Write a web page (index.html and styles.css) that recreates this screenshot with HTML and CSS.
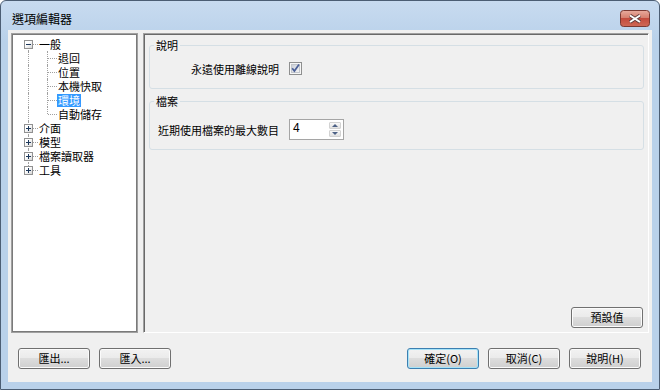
FILE: index.html
```html
<!DOCTYPE html>
<html lang="zh-Hant">
<head>
    <meta charset="UTF-8">
    <title>選項編輯器</title>
    <link rel="stylesheet" href="styles.css">
</head>
<body>
    <div class="window">
        <div class="titlebar">
            <span class="title">選項編輯器</span>
            <svg class="close-btn" width="30" height="17" viewBox="0 0 30 17">
                <defs>
                    <linearGradient id="closeFill" x1="0" y1="0" x2="0" y2="1">
                        <stop offset="0" stop-color="#e8ab9e"/>
                        <stop offset="0.45" stop-color="#d6806f"/>
                        <stop offset="0.5" stop-color="#c34b3d"/>
                        <stop offset="1" stop-color="#cf6a57"/>
                    </linearGradient>
                </defs>
                <rect x="0.5" y="0.5" width="29" height="16" rx="3" fill="url(#closeFill)" stroke="#7a3a33"/>
                <path d="M10 5.5 L20 12 M20 5.5 L10 12" stroke="#5b3b3b" stroke-width="3.8"/>
                <path d="M10 5.5 L20 12 M20 5.5 L10 12" stroke="#fff" stroke-width="2"/>
            </svg>
        </div>

        <div class="client">
            <div class="main">
                <!-- category tree -->
                <div class="tree">
                    <div class="node">
                        <span class="gut line-down elbow"><span class="expander"></span></span>
                        <span class="text">一般</span>
                    </div>
                    <div class="node">
                        <span class="gut line-full"></span>
                        <span class="gut line-full elbow"></span>
                        <span class="text">退回</span>
                    </div>
                    <div class="node">
                        <span class="gut line-full"></span>
                        <span class="gut line-full elbow"></span>
                        <span class="text">位置</span>
                    </div>
                    <div class="node">
                        <span class="gut line-full"></span>
                        <span class="gut line-full elbow"></span>
                        <span class="text">本機快取</span>
                    </div>
                    <div class="node">
                        <span class="gut line-full"></span>
                        <span class="gut line-full elbow"></span>
                        <span class="text selected">環境</span>
                    </div>
                    <div class="node">
                        <span class="gut line-full"></span>
                        <span class="gut line-up elbow"></span>
                        <span class="text">自動儲存</span>
                    </div>
                    <div class="node">
                        <span class="gut line-full elbow"><span class="expander plus"></span></span>
                        <span class="text">介面</span>
                    </div>
                    <div class="node">
                        <span class="gut line-full elbow"><span class="expander plus"></span></span>
                        <span class="text">模型</span>
                    </div>
                    <div class="node">
                        <span class="gut line-full elbow"><span class="expander plus"></span></span>
                        <span class="text">檔案讀取器</span>
                    </div>
                    <div class="node">
                        <span class="gut line-up elbow"><span class="expander plus"></span></span>
                        <span class="text">工具</span>
                    </div>
                </div>

                <!-- settings page -->
                <div class="page">
                    <fieldset class="group group-help">
                        <legend>說明</legend>
                        <div class="form-row">
                            <label class="form-label">永遠使用離線說明</label>
                            <svg class="checkbox" width="13" height="13" viewBox="0 0 13 13">
                                <defs>
                                    <linearGradient id="checkFill" x1="0" y1="0" x2="1" y2="1">
                                        <stop offset="0" stop-color="#c9ced6"/>
                                        <stop offset="1" stop-color="#f6f6f6"/>
                                    </linearGradient>
                                </defs>
                                <rect x="0.5" y="0.5" width="12" height="12" fill="#f6f6f6" stroke="#8e8f8f"/>
                                <rect x="2.5" y="2.5" width="8" height="8" fill="url(#checkFill)" stroke="#c2c6cc"/>
                                <path d="M3.2 6.2 L5.4 9 L10 2.6" fill="none" stroke="#4a5f97" stroke-width="1.7"/>
                            </svg>
                        </div>
                    </fieldset>

                    <fieldset class="group group-file">
                        <legend>檔案</legend>
                        <div class="form-row">
                            <label class="form-label">近期使用檔案的最大數目</label>
                            <div class="spin">
                                <span class="spin-value">4</span>
                                <span class="spin-buttons">
                                    <span class="spin-btn up"></span>
                                    <span class="spin-btn down"></span>
                                </span>
                            </div>
                        </div>
                    </fieldset>

                    <div class="page-footer">
                        <button class="btn">預設值</button>
                    </div>
                </div>
            </div>

            <div class="actions">
                <button class="btn">匯出...</button>
                <button class="btn">匯入...</button>
                <button class="btn btn-default push">確定(O)</button>
                <button class="btn">取消(C)</button>
                <button class="btn">說明(H)</button>
            </div>
        </div>
    </div>
</body>
</html>
```

FILE: styles.css
```css
body {
    margin: 0;
    background: #fff;
    font-family: "Noto Sans CJK TC", "Noto Sans", sans-serif;
    font-size: 11px;
    color: #000;
}
.window {
    width: 660px;
    height: 390px;
    box-sizing: border-box;
    border: 1px solid #4c5e74;
    border-radius: 6px 6px 0 0;
    background: linear-gradient(#c8dbf0, #b9d1ea 40px);
    padding: 0 7px 7px;
    display: flex;
    flex-direction: column;
}
.titlebar {
    height: 29px;
    box-sizing: border-box;
    padding-top: 9px;
    display: flex;
    align-items: flex-start;
    justify-content: space-between;
}
.title {
    margin-left: 4px;
    font-size: 12px;
    line-height: 17px;
}
.close-btn {
    margin-right: 2px;
}
.client {
    flex: 1;
    background: #f0f0f0;
    display: flex;
    flex-direction: column;
}
.main {
    display: flex;
    gap: 5px;
    height: 300px;
    margin: 3px 3px 0 3px;
}

/* tree */
.tree {
    width: 127px;
    flex: none;
    box-sizing: border-box;
    border: 1px solid #a0a0a0;
    box-shadow: inset 0 0 0 1px #7a7a7a;
    background: #fff;
    padding: 3px 0 0 7px;
}
.node {
    display: flex;
    align-items: center;
    height: 14px;
}
.gut {
    position: relative;
    width: 19px;
    height: 14px;
    flex: none;
    display: flex;
    justify-content: center;
    align-items: flex-start;
}
.gut::before {
    content: "";
    position: absolute;
    left: 9px;
    border-left: 1px dotted #a0a0a0;
}
.line-full::before {
    top: 0;
    bottom: 0;
}
.line-down::before {
    top: 7px;
    bottom: 0;
}
.line-up::before {
    top: 0;
    height: 7px;
}
.elbow::after {
    content: "";
    position: absolute;
    left: 10px;
    right: 0;
    top: 7px;
    border-top: 1px dotted #a0a0a0;
}
.expander {
    position: relative;
    z-index: 1;
    width: 9px;
    height: 9px;
    margin-top: 3px;
    box-sizing: border-box;
    border: 1px solid #919191;
    background: linear-gradient(135deg, #fff 35%, #d6d6d6);
}
.expander::before {
    content: "";
    position: absolute;
    left: 1px;
    right: 1px;
    top: 3px;
    height: 1px;
    background: #1e395b;
}
.expander.plus::after {
    content: "";
    position: absolute;
    top: 1px;
    bottom: 1px;
    left: 3px;
    width: 1px;
    background: #1e395b;
}
.text {
    padding: 0 1px;
    line-height: 13px;
    white-space: nowrap;
}
.text.selected {
    background: #3399ff;
    color: #fff;
}

/* page */
.page {
    flex: 1;
    border: 1px solid;
    border-color: #a0a0a0 #fff #fff #a0a0a0;
    box-shadow: inset 1px 1px 0 #696969;
    padding: 4px 4px 4px 5px;
    display: flex;
    flex-direction: column;
}
.group {
    margin: 0;
    border: 1px solid #d5dfe5;
    border-radius: 3px;
    padding: 6px 8px 9px;
}
.group legend {
    margin-left: -4px;
    padding: 0 2px;
    line-height: 14px;
}
.group-file {
    margin-top: 5px;
    padding-top: 11px;
}
.form-row {
    display: grid;
    grid-template-columns: 121px auto;
    column-gap: 10px;
    align-items: center;
    justify-content: start;
    min-height: 21px;
}
.form-label {
    text-align: right;
    white-space: nowrap;
}
.checkbox {
    display: block;
}
.spin {
    width: 55px;
    height: 21px;
    box-sizing: border-box;
    border: 1px solid #a5a5a5;
    background: #fff;
    padding: 2px;
    display: flex;
    justify-content: space-between;
}
.spin-value {
    padding-left: 1px;
    font-family: "Liberation Sans", sans-serif;
    font-size: 12px;
    line-height: 13px;
}
.spin-buttons {
    display: flex;
    flex-direction: column;
    gap: 1px;
}
.spin-btn {
    width: 12px;
    height: 7px;
    box-sizing: border-box;
    border: 1px solid #d2d2d2;
    border-radius: 1px;
    background: linear-gradient(#f8f8f8, #e1e1e1);
    display: flex;
    align-items: center;
    justify-content: center;
}
.spin-btn::before {
    content: "";
    border-left: 3px solid transparent;
    border-right: 3px solid transparent;
}
.spin-btn.up::before {
    border-bottom: 3px solid #4d6185;
}
.spin-btn.down::before {
    border-top: 3px solid #4d6185;
}
.page-footer {
    margin-top: auto;
    display: flex;
    justify-content: flex-end;
    padding-right: 1px;
}

/* buttons */
.btn {
    width: 72px;
    height: 21px;
    box-sizing: border-box;
    border: 1px solid #707070;
    border-radius: 3px;
    background: linear-gradient(#f2f2f2 0%, #ebebeb 45%, #dddddd 50%, #cfcfcf 100%);
    box-shadow: inset 0 0 0 1px #fbfbfb;
    font: 11px "Noto Sans CJK TC", "Noto Sans", sans-serif;
    color: #000;
    padding: 0;
    line-height: 19px;
}
.btn-default {
    border-color: #3c7fb1;
    box-shadow: inset 0 0 0 1px #a6e3f8;
}
.actions {
    display: flex;
    gap: 9px;
    margin-top: 15px;
    padding: 0 11px 0 10px;
}
.push {
    margin-left: auto;
}
```
